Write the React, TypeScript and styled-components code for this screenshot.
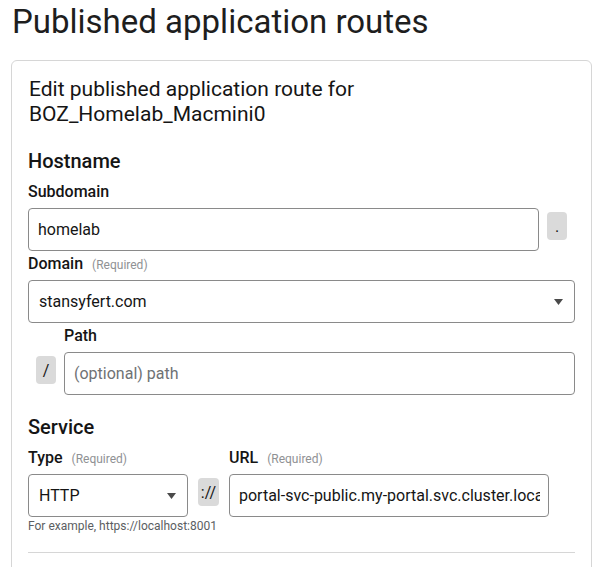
import React from "react";
import styled, { createGlobalStyle } from "styled-components";

const GlobalStyle = createGlobalStyle`
  html, body {
    margin: 0;
    padding: 0;
    background: #ffffff;
  }
  body {
    font-family: Roboto, "Liberation Sans", sans-serif;
    color: #151515;
  }
  * { box-sizing: border-box; }
`;

const Page = styled.div`
  padding: 0 18px 0 11px;
`;

const PageTitle = styled.h1`
  margin: 0;
  padding: 2px 0 0 1px;
  font-size: 33px;
  line-height: 40px;
  font-weight: 400;
  color: #1e1e1e;
`;

const Card = styled.section`
  margin-top: 18px;
  border: 1px solid #d6d6d6;
  border-radius: 6px;
  padding: 16px 16px 24px 16px;
`;

const CardTitle = styled.h2`
  margin: 0;
  font-size: 21px;
  line-height: 24.5px;
  font-weight: 400;
  padding-left: 1px;
`;

const SectionTitle = styled.h3<{ $top: number }>`
  margin: ${(p) => p.$top}px 0 9px 0;
  font-size: 20px;
  line-height: 24px;
  font-weight: 500;
`;

const Fields = styled.div`
  display: flex;
  flex-direction: column;
  gap: 3px;
`;

const FieldGrid = styled.div<{ $cols: string }>`
  display: grid;
  grid-template-columns: ${(p) => p.$cols};
  grid-template-rows: auto auto auto;
  align-items: start;
`;

const Label = styled.label<{ $col?: number }>`
  grid-column: ${(p) => p.$col ?? 1};
  grid-row: 1;
  display: flex;
  align-items: baseline;
  gap: 9px;
  height: 20px;
  margin-bottom: 6px;
  font-size: 16px;
  line-height: 20px;
  font-weight: 500;
  color: #151515;
`;

const Required = styled.span`
  font-size: 12px;
  font-weight: 400;
  color: #8f9194;
`;

const Control = styled.div<{ $col?: number }>`
  grid-column: ${(p) => p.$col ?? 1};
  grid-row: 2;
  min-width: 0;
`;

const TextInput = styled.input`
  display: block;
  width: 100%;
  height: 43px;
  margin: 0;
  padding: 0 8px 0 9px;
  border: 1px solid #8a8a8a;
  border-radius: 4px;
  background: #ffffff;
  font-family: inherit;
  font-size: 16px;
  color: #151515;
  outline: none;
  &::placeholder {
    color: #6f7275;
  }
`;

const SelectBox = styled.div`
  display: flex;
  align-items: center;
  justify-content: space-between;
  height: 43px;
  padding: 0 11px 0 10px;
  border: 1px solid #8a8a8a;
  border-radius: 4px;
  background: #ffffff;
  font-size: 16px;
  color: #151515;
  cursor: pointer;
`;

const Caret = styled.svg`
  width: 9px;
  height: 6px;
  flex: none;
  fill: #4a4a4a;
`;

const AddonCell = styled.div<{ $col: number }>`
  grid-column: ${(p) => p.$col};
  grid-row: 2;
  display: flex;
  justify-content: center;
  padding-top: 4px;
`;

const Addon = styled.span`
  display: inline-flex;
  align-items: center;
  justify-content: center;
  min-width: 20px;
  height: 28px;
  padding: 0 3px;
  border-radius: 4px;
  background: #dadada;
  font-size: 16px;
  color: #151515;
`;

const Helper = styled.div`
  grid-column: 1 / span 3;
  grid-row: 3;
  font-size: 12px;
  line-height: 18px;
  color: #5b5e62;
`;

const Divider = styled.hr`
  margin: 17px 0 0 0;
  border: none;
  border-top: 1px solid #d6d6d6;
`;

const CaretIcon = () => (
  <Caret viewBox="0 0 9 6" aria-hidden="true">
    <path d="M0 0 H9 L4.5 6 Z" />
  </Caret>
);

export default function App() {
  return (
    <>
      <GlobalStyle />
      <Page>
        <PageTitle>Published application routes</PageTitle>
        <Card>
          <CardTitle>
            Edit published application route for
            <br />
            BOZ_Homelab_Macmini0
          </CardTitle>

          <SectionTitle $top={23}>Hostname</SectionTitle>
          <Fields>
            <FieldGrid $cols="1fr 36px">
              <Label>Subdomain</Label>
              <Control>
                <TextInput defaultValue="homelab" />
              </Control>
              <AddonCell $col={2}>
                <Addon>.</Addon>
              </AddonCell>
            </FieldGrid>

            <FieldGrid $cols="1fr">
              <Label>
                Domain <Required>(Required)</Required>
              </Label>
              <Control>
                <SelectBox>
                  <span>stansyfert.com</span>
                  <CaretIcon />
                </SelectBox>
              </Control>
            </FieldGrid>

            <FieldGrid $cols="36px 1fr">
              <Label $col={2}>Path</Label>
              <AddonCell $col={1}>
                <Addon>/</Addon>
              </AddonCell>
              <Control $col={2}>
                <TextInput placeholder="(optional) path" />
              </Control>
            </FieldGrid>
          </Fields>

          <SectionTitle $top={20}>Service</SectionTitle>
          <FieldGrid $cols="160px 41px 320px">
            <Label $col={1}>
              Type <Required>(Required)</Required>
            </Label>
            <Label $col={3}>
              URL <Required>(Required)</Required>
            </Label>
            <Control $col={1}>
              <SelectBox>
                <span>HTTP</span>
                <CaretIcon />
              </SelectBox>
            </Control>
            <AddonCell $col={2}>
              <Addon>://</Addon>
            </AddonCell>
            <Control $col={3}>
              <TextInput defaultValue="portal-svc-public.my-portal.svc.cluster.local" />
            </Control>
            <Helper>For example, https://localhost:8001</Helper>
          </FieldGrid>

          <Divider />
        </Card>
      </Page>
    </>
  );
}
